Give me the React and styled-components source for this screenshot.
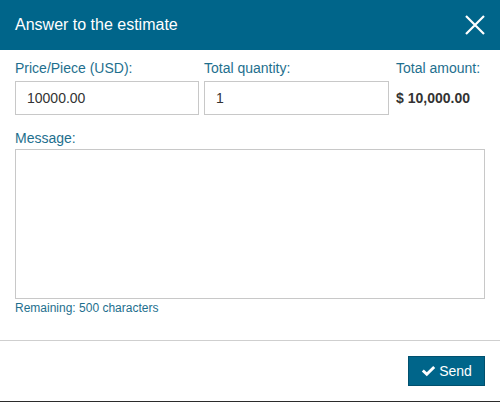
import React, { useState } from 'react';
import styled, { createGlobalStyle } from 'styled-components';

const GlobalStyle = createGlobalStyle`
  body {
    margin: 0;
    background: #fff;
    font-family: "Liberation Sans", Arial, sans-serif;
  }
`;

const Modal = styled.div`
  width: 500px;
  height: 402px;
  box-sizing: border-box;
  border-bottom: 1px solid #2b2b2b;
  display: flex;
  flex-direction: column;
  background: #fff;
`;

const Header = styled.div`
  height: 50px;
  background: #00658a;
  display: flex;
  align-items: center;
  justify-content: space-between;
  padding: 0 14px 0 15px;
`;

const Title = styled.h4`
  margin: 0;
  color: #fff;
  font-size: 16px;
  font-weight: normal;
`;

const CloseButton = styled.button`
  border: 0;
  background: transparent;
  padding: 0;
  width: 22px;
  height: 22px;
  cursor: pointer;
  display: flex;
`;

const Body = styled.div`
  padding: 8px 15px 0 15px;
  flex: 1;
`;

const Row = styled.div`
  display: grid;
  grid-template-columns: 184px 185px 1fr;
  column-gap: 5px;
`;

const Field = styled.div`
  display: flex;
  flex-direction: column;
  padding-left: ${(p) => (p.$shift ? '2px' : '0')};
`;

const Label = styled.label`
  color: #1e6f8e;
  font-size: 14px;
  line-height: 20px;
  margin-bottom: ${(p) => (p.$tight ? '1px' : '3px')};
`;

const Input = styled.input`
  box-sizing: border-box;
  height: 34px;
  border: 1px solid #c8c8c8;
  padding: 0 11px;
  font-family: inherit;
  font-size: 14px;
  color: #333;
  outline: none;
`;

const Amount = styled.div`
  height: 34px;
  display: flex;
  align-items: center;
  font-weight: bold;
  font-size: 14px;
  color: #333;
`;

const MessageBlock = styled.div`
  margin-top: 13px;
  display: flex;
  flex-direction: column;
`;

const TextArea = styled.textarea`
  box-sizing: border-box;
  width: 470px;
  height: 150px;
  border: 1px solid #c8c8c8;
  resize: none;
  outline: none;
  font-family: inherit;
  font-size: 14px;
  padding: 8px 11px;
`;

const Remaining = styled.div`
  color: #1e6f8e;
  font-size: 12px;
  line-height: 16px;
  margin-top: 1px;
`;

const Footer = styled.div`
  border-top: 1px solid #cfcfcf;
  padding: 15px 15px 15px 15px;
  display: flex;
  justify-content: flex-end;
`;

const SendButton = styled.button`
  width: 77px;
  height: 30px;
  background: #00658a;
  border: 1px solid #00506e;
  color: #fff;
  font-family: inherit;
  font-size: 14px;
  display: flex;
  align-items: center;
  justify-content: center;
  gap: 3px;
  padding: 0;
  cursor: pointer;
`;

function CloseIcon() {
  return (
    <svg width="22" height="22" viewBox="0 0 22 22">
      <path d="M2 2 L20 20 M20 2 L2 20" stroke="#fff" strokeWidth="2.2" fill="none" />
    </svg>
  );
}

function CheckIcon() {
  return (
    <svg width="15" height="12" viewBox="0 0 15 12">
      <path d="M0.8 6.4 L2.8 4.4 L5.8 7.3 L12.2 0.9 L14.2 2.9 L5.8 11.2 Z" fill="#fff" />
    </svg>
  );
}

export default function App() {
  const [price, setPrice] = useState('10000.00');
  const [qty, setQty] = useState('1');
  const [message, setMessage] = useState('');
  const total = (parseFloat(price) || 0) * (parseFloat(qty) || 0);
  const formatted = total.toLocaleString('en-US', { minimumFractionDigits: 2, maximumFractionDigits: 2 });

  return (
    <>
      <GlobalStyle />
      <Modal>
        <Header>
          <Title>Answer to the estimate</Title>
          <CloseButton aria-label="Close">
            <CloseIcon />
          </CloseButton>
        </Header>
        <Body>
          <Row>
            <Field>
              <Label>Price/Piece (USD):</Label>
              <Input value={price} onChange={(e) => setPrice(e.target.value)} />
            </Field>
            <Field>
              <Label>Total quantity:</Label>
              <Input value={qty} onChange={(e) => setQty(e.target.value)} />
            </Field>
            <Field $shift>
              <Label>Total amount:</Label>
              <Amount>$ {formatted}</Amount>
            </Field>
          </Row>
          <MessageBlock>
            <Label $tight>Message:</Label>
            <TextArea value={message} maxLength={500} onChange={(e) => setMessage(e.target.value)} />
            <Remaining>Remaining: {500 - message.length} characters</Remaining>
          </MessageBlock>
        </Body>
        <Footer>
          <SendButton>
            <CheckIcon />
            Send
          </SendButton>
        </Footer>
      </Modal>
    </>
  );
}
